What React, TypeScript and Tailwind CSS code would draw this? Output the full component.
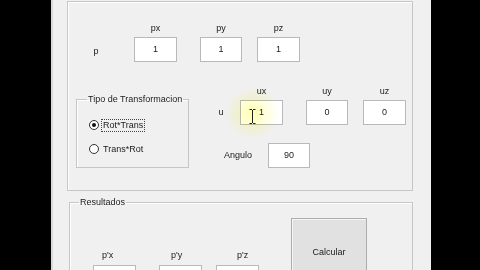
import React from "react"

const font = { fontFamily: '"Liberation Sans", Arial, sans-serif' }

function Field({ value, className = "" }: { value: string; className?: string }) {
  return (
    <div
      className={`h-[25px] w-full border border-[#b9b9b9] bg-white flex items-center justify-center text-[9px] text-[#222] ${className}`}
    >
      {value}
    </div>
  )
}

function Column({
  label,
  value,
  width = "w-[43px]",
  labelClass = "text-center",
  gap = "gap-[2px]",
  children,
}: {
  label: string
  value: string
  width?: string
  labelClass?: string
  gap?: string
  children?: React.ReactNode
}) {
  return (
    <div className={`relative flex flex-col ${gap} ${width}`}>
      <span className={`h-[14px] leading-[14px] text-[9px] ${labelClass}`}>{label}</span>
      <Field value={value} />
      {children}
    </div>
  )
}

function Radio({ checked, label, focus }: { checked?: boolean; label: string; focus?: boolean }) {
  return (
    <div className="flex items-center h-[14px]">
      <span className="ml-[12px] flex h-[10px] w-[10px] items-center justify-center rounded-full border border-[#333] bg-white">
        {checked && <span className="h-[4px] w-[4px] rounded-full bg-[#111]" />}
      </span>
      <span
        className={`ml-[2px] px-[1px] leading-[11px] text-[9px] border ${
          focus ? "border-dotted border-[#444]" : "border-transparent"
        }`}
      >
        {label}
      </span>
    </div>
  )
}

export default function App() {
  return (
    <div className="flex h-[270px] w-[480px] overflow-hidden bg-black text-[#1a1a1a]" style={font}>
      <div className="ml-[51px] h-full w-[380px] border-l-2 border-[#d9d9d9] bg-[#f0f0f0]">
        {/* parameters panel, its title is scrolled out of view */}
        <div className="mt-[1px] ml-[14px] h-[190px] w-[346px] border border-[#c6c6c6] shadow-[inset_1px_1px_0_#ffffff]">
          <div className="mt-[19px] flex items-end">
            <span className="ml-[23px] mb-[5px] w-[10px] text-center leading-[11px] text-[9px]">p</span>
            <div className="ml-[33px]">
              <Column label="px" value="1" />
            </div>
            <div className="ml-[23px]">
              <Column label="py" value="1" width="w-[42px]" />
            </div>
            <div className="ml-[15px]">
              <Column label="pz" value="1" />
            </div>
          </div>

          <div className="mt-[22px] flex items-start">
            <fieldset className="ml-[8px] mt-[10px] h-[74px] w-[113px] border border-[#c6c6c6] shadow-[inset_1px_1px_0_#ffffff]">
              <legend className="ml-[10px] px-[1px] leading-[11px] text-[9px]">Tipo de Transformacion</legend>
              <div className="mt-[13px] flex flex-col gap-[10px]">
                <Radio checked focus label="Rot*Trans" />
                <Radio label="Trans*Rot" />
              </div>
            </fieldset>

            <div className="ml-[29px] flex flex-col">
              <div className="flex items-start">
                <span className="mt-[23px] w-[6px] text-center leading-[11px] text-[9px]">u</span>
                <div className="ml-[16px]">
                  <Column label="ux" value="1">
                    <div className="pointer-events-none absolute left-[-18px] top-[6px] h-[46px] w-[60px] mix-blend-multiply bg-[radial-gradient(circle,rgba(255,255,150,0.8)_0%,rgba(255,255,180,0.4)_40%,transparent_70%)]" />
                    <svg
                      className="absolute left-[9px] top-[25px]"
                      width="7"
                      height="15"
                      viewBox="0 0 7 15"
                      fill="none"
                      stroke="#222"
                      strokeWidth="1"
                    >
                      <path d="M0.5 0.5h2.5M4 0.5h2.5M3.5 1v13M0.5 14.5h2.5M4 14.5h2.5" />
                    </svg>
                  </Column>
                </div>
                <div className="ml-[23px]">
                  <Column label="uy" value="0" width="w-[42px]" />
                </div>
                <div className="ml-[15px]">
                  <Column label="uz" value="0" />
                </div>
              </div>
              <div className="mt-[18px] flex items-center">
                <span className="ml-[6px] w-[28px] text-[9px]">Angulo</span>
                <div className="ml-[16px] w-[42px]">
                  <Field value="90" />
                </div>
              </div>
            </div>
          </div>
        </div>

        {/* results panel */}
        <fieldset className="ml-[16px] mt-[6px] h-[120px] w-[344px] border border-[#c6c6c6] shadow-[inset_1px_1px_0_#ffffff]">
          <legend className="ml-[9px] px-[1px] leading-[11px] text-[9px]">Resultados</legend>
          <div className="flex items-start">
            <div className="ml-[23px] mt-[40px]">
              <Column label="p'x" value="" labelClass="pl-[9px]" gap="gap-[3px]" />
            </div>
            <div className="ml-[23px] mt-[40px]">
              <Column label="p'y" value="" labelClass="pl-[12px]" gap="gap-[3px]" />
            </div>
            <div className="ml-[14px] mt-[40px]">
              <Column label="p'z" value="" labelClass="pl-[21px]" gap="gap-[3px]" />
            </div>
            <button className="ml-[32px] mt-[10px] flex h-[70px] w-[76px] items-center justify-center border border-[#adadad] bg-[#e1e1e1] text-[9px] shadow-[inset_1px_1px_0_#f4f4f4]">
              Calcular
            </button>
          </div>
        </fieldset>
      </div>
    </div>
  )
}
